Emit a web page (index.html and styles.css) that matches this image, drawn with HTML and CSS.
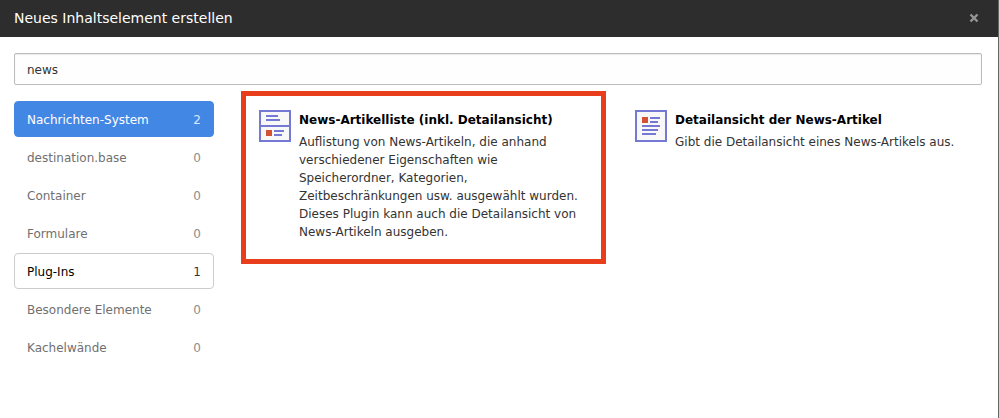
FILE: index.html
```html
<!DOCTYPE html>
<html lang="de">
<head>
<meta charset="utf-8">
<meta name="viewport" content="width=device-width, initial-scale=1">
<title>Neues Inhaltselement erstellen</title>
<link rel="stylesheet" href="styles.css">
</head>
<body>
<div class="modal">
  <header class="modal-header">
    <h1 class="modal-title">Neues Inhaltselement erstellen</h1>
    <button class="close" type="button" aria-label="Schließen">
      <svg width="10" height="10" viewBox="0 0 10 10"><path d="M1.5 1.5l7 7M8.500 1.500L1.500 8.500" fill="none" stroke="currentColor" stroke-width="2.400"/></svg>
    </button>
  </header>
  <main class="modal-body">
    <input class="search" type="search" aria-label="Suche" value="news">
    <div class="wizard">
      <nav class="categories">
        <button class="category active" type="button"><span>Nachrichten-System</span><span class="count">2</span></button>
        <button class="category empty" type="button"><span>destination.base</span><span class="count">0</span></button>
        <button class="category empty" type="button"><span>Container</span><span class="count">0</span></button>
        <button class="category empty" type="button"><span>Formulare</span><span class="count">0</span></button>
        <button class="category outlined" type="button"><span>Plug-Ins</span><span class="count">1</span></button>
        <button class="category empty" type="button"><span>Besondere Elemente</span><span class="count">0</span></button>
        <button class="category empty" type="button"><span>Kachelwände</span><span class="count">0</span></button>
      </nav>
      <div class="items">
        <button class="item highlighted" type="button">
          <svg class="item-icon" width="32" height="32" viewBox="0 0 32 32">
            <path fill="#f8f8f8" stroke="#7679d3" stroke-width="2" d="M1 1h30v30H1z"/>
            <path fill="#7679d3" d="M2 15h28v2H2z"/>
            <path fill="#7679d3" d="M7 5h12v2H7zM7 9h14v2H7zM15 20h10v2H15zM15 24h8v2h-8z"/>
            <path fill="#d35234" d="M7 20h6v6H7z"/>
          </svg>
          <span class="item-text">
            <strong class="item-title">News-Artikelliste (inkl. Detailansicht)</strong>
            <span class="item-description">Auflistung von News-Artikeln, die anhand verschiedener Eigenschaften wie Speicherordner, Kategorien, Zeitbeschränkungen usw. ausgewählt wurden. Dieses Plugin kann auch die Detailansicht von News-Artikeln ausgeben.</span>
          </span>
        </button>
        <button class="item" type="button">
          <svg class="item-icon" width="32" height="32" viewBox="0 0 32 32">
            <path fill="#f8f8f8" stroke="#7679d3" stroke-width="2" d="M1 1h30v30H1z"/>
            <path fill="#7679d3" d="M15 7h10v2H15zM15 11h8v2h-8zM7 15h18v2H7zM7 19h16v2H7zM7 23h14v2H7z"/>
            <path fill="#d35234" d="M7 7h6v6H7z"/>
          </svg>
          <span class="item-text">
            <strong class="item-title">Detailansicht der News-Artikel</strong>
            <span class="item-description">Gibt die Detailansicht eines News-Artikels aus.</span>
          </span>
        </button>
      </div>
    </div>
  </main>
</div>
</body>
</html>
```
FILE: styles.css
```css
* {
  box-sizing: border-box;
}

body {
  margin: 0;
  background: #fff;
  color: #333;
  font: 12px/18px Verdana, "DejaVu Sans", sans-serif;
}

button,
input {
  font: inherit;
}

button {
  margin: 0;
  border: 0;
  background: none;
  text-align: left;
}

.modal {
  min-height: 100vh;
  border-right: 1px solid #666;
}

.modal-header {
  display: flex;
  align-items: center;
  justify-content: space-between;
  height: 37px;
  padding: 0 16px 1px 14px;
  background: #2d2d2d;
  color: #fff;
}

.modal-title {
  margin: 0;
  font-size: 14px;
  font-weight: 400;
}

.close {
  display: flex;
  padding: 3px;
  color: #969696;
}

.modal-body {
  padding: 16px 16px 16px 14px;
}

.search {
  display: block;
  width: 100%;
  height: 32px;
  padding: 2px 12px 0;
  border: 1px solid #bbb;
  border-radius: 2px;
  background: #fefefe;
  box-shadow: inset 0 1px 1px rgba(0, 0, 0, 0.08);
  color: #333;
  appearance: none;
  outline: 0;
}

.search::-webkit-search-cancel-button {
  display: none;
}

.wizard {
  display: flex;
  align-items: flex-start;
  gap: 27px;
  margin-top: 6px;
}

.categories {
  display: flex;
  flex: 0 0 200px;
  flex-direction: column;
  gap: 2px;
  padding-top: 10px;
}

.category {
  display: flex;
  justify-content: space-between;
  padding: 9px 12px 7px;
  border: 1px solid transparent;
  border-radius: 4px;
  color: #000;
}

.category.active {
  border-color: #4387e5;
  background: #4387e5;
  color: #fff;
}

.category.outlined {
  border-color: #ccc;
}

.category.empty {
  color: #707070;
}

.count {
  opacity: 0.8;
}

.items {
  display: grid;
  flex: 1;
  grid-template-columns: 1fr 1fr;
  gap: 11px;
  align-items: start;
}

.item {
  display: flex;
  align-items: flex-start;
  gap: 8px;
  padding: 14px 13px 18px;
  border: 5px solid transparent;
  color: #333;
}

.item.highlighted {
  border-color: #e83e1c;
}

.item-icon {
  flex: none;
}

.item-text {
  padding-top: 1px;
}

.item-title {
  display: block;
  margin-bottom: 4px;
  color: #000;
}

.item-description {
  display: block;
}
```
